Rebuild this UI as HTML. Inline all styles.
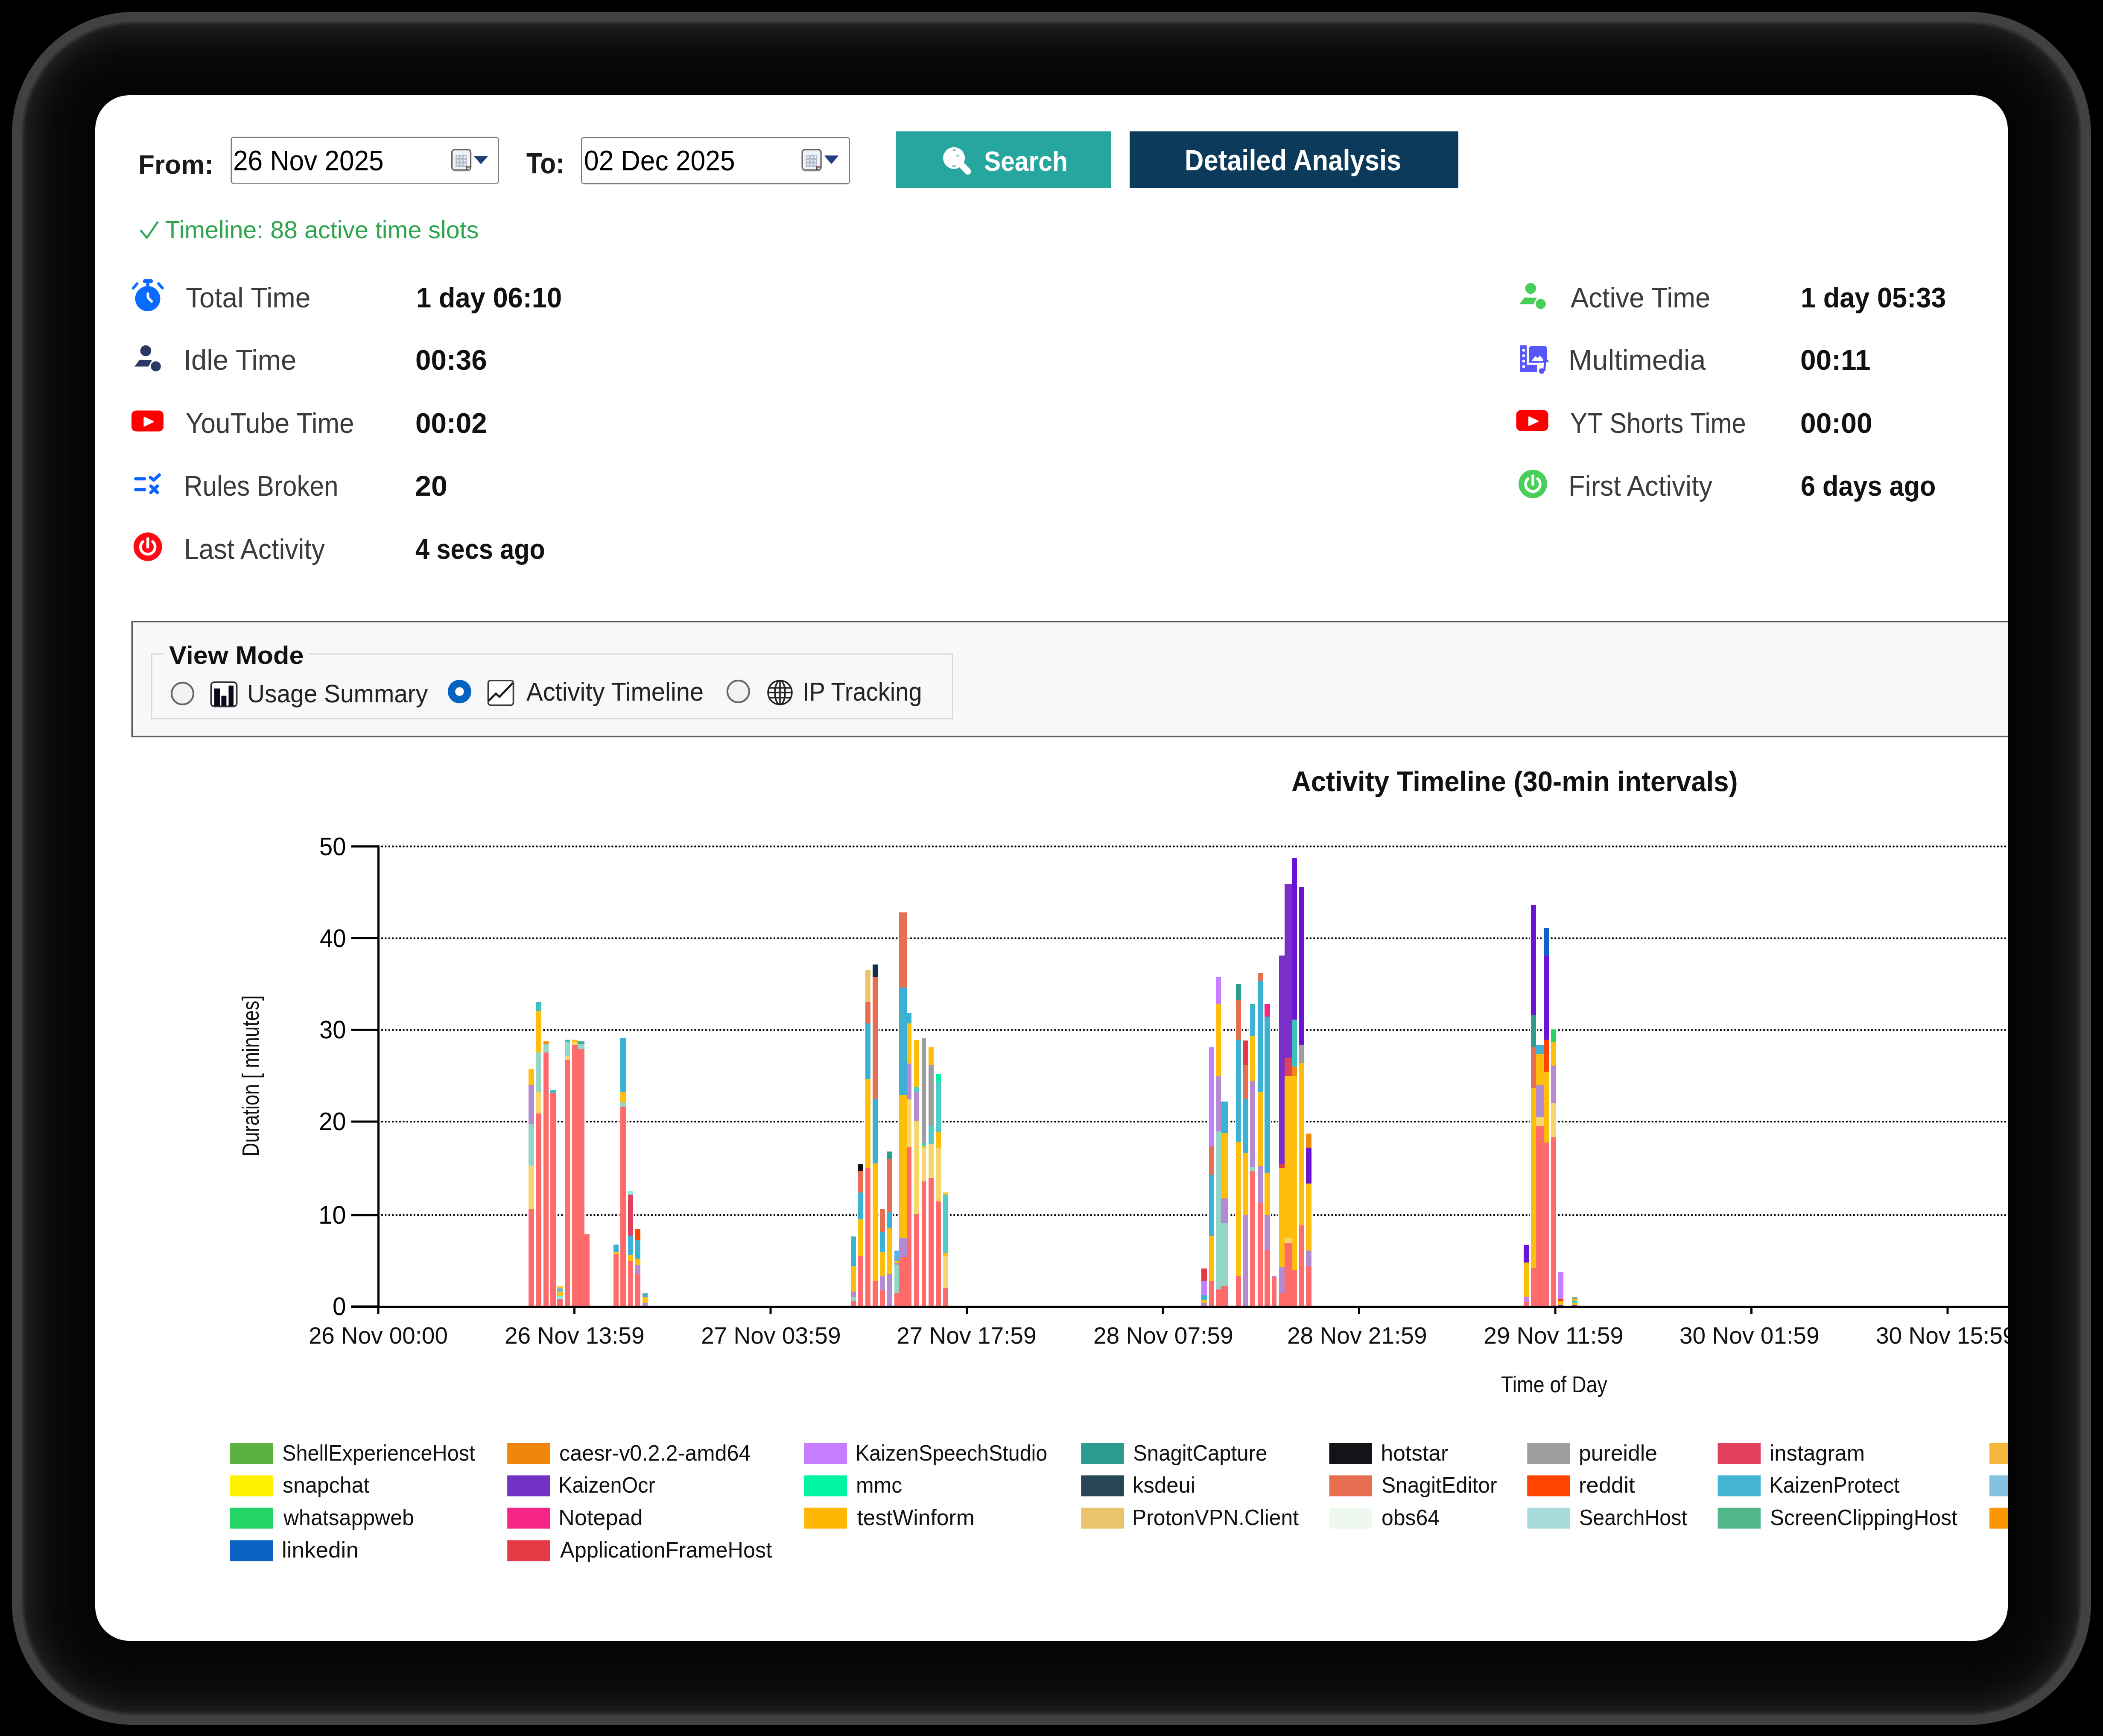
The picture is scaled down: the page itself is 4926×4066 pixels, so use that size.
<!DOCTYPE html>
<html><head><meta charset="utf-8"><title>Activity Timeline</title>
<style>
html,body{margin:0;padding:0;background:#000;}
body{width:4926px;height:4066px;position:relative;overflow:hidden;font-family:"Liberation Sans",sans-serif;}
.sh{position:absolute;}
#card{position:absolute;left:223px;top:223px;width:4480px;height:3620px;border-radius:80px;background:#fff;overflow:hidden;}
#in{position:absolute;left:-223px;top:-223px;width:4926px;height:4066px;}
.t{position:absolute;white-space:nowrap;transform-origin:0 0;}
.abs{position:absolute;}
</style></head><body>
<div class="sh" style="left:28px;top:28px;width:4870px;height:4012px;border-radius:285px;background:#414141"></div>
<div class="sh" style="left:50px;top:50px;width:4826px;height:3968px;border-radius:263px;background:#363636"></div>
<div class="sh" style="left:54px;top:54px;width:4818px;height:3960px;border-radius:259px;background:#292929"></div>
<div class="sh" style="left:57px;top:57px;width:4812px;height:3954px;border-radius:256px;background:#222222"></div>
<div class="sh" style="left:60px;top:60px;width:4806px;height:3948px;border-radius:253px;background:#1c1c1c"></div>
<div class="sh" style="left:66px;top:66px;width:4794px;height:3936px;border-radius:247px;background:#191919"></div>
<div class="sh" style="left:73px;top:73px;width:4780px;height:3922px;border-radius:240px;background:#151515"></div>
<div class="sh" style="left:83px;top:83px;width:4760px;height:3902px;border-radius:230px;background:#131313"></div>
<div class="sh" style="left:91px;top:91px;width:4744px;height:3886px;border-radius:222px;background:#101010"></div>
<div class="sh" style="left:100px;top:100px;width:4726px;height:3868px;border-radius:213px;background:#0e0e0e"></div>
<div class="sh" style="left:110px;top:110px;width:4706px;height:3848px;border-radius:203px;background:#0c0c0c"></div>
<div class="sh" style="left:120px;top:120px;width:4686px;height:3828px;border-radius:193px;background:#0a0a0a"></div>
<div class="sh" style="left:132px;top:132px;width:4662px;height:3804px;border-radius:181px;background:#090909"></div>
<div class="sh" style="left:146px;top:146px;width:4634px;height:3776px;border-radius:167px;background:#080808"></div>
<div class="sh" style="left:160px;top:160px;width:4606px;height:3748px;border-radius:153px;background:#060606"></div>
<div class="sh" style="left:176px;top:176px;width:4574px;height:3716px;border-radius:137px;background:#050505"></div>
<div class="sh" style="left:192px;top:192px;width:4542px;height:3684px;border-radius:121px;background:#050505"></div>
<div class="sh" style="left:208px;top:208px;width:4510px;height:3652px;border-radius:105px;background:#040404"></div>
<div id="card"><div id="in">
<svg class="abs" style="left:0;top:0" width="4926" height="4066" viewBox="0 0 4926 4066"><rect x="541.75" y="321.75" width="625.8" height="107.5" rx="5" fill="#fff" stroke="#7d7d7d" stroke-width="2.5"/>
<rect x="1362.25" y="322.25" width="627.5" height="107.9" rx="5" fill="#fff" stroke="#7d7d7d" stroke-width="2.5"/>
<rect x="1060" y="395" width="42" height="7" rx="3" fill="#d8d8d8" opacity="0.6"/><rect x="1058.6" y="350.6" width="44" height="47.5" rx="6" fill="#eef3fb" stroke="#6b6060" stroke-width="3.2"/><rect x="1067" y="363" width="26.6" height="28" rx="2" fill="#b9bdc9"/><circle cx="1072.0" cy="368.0" r="2.2" fill="#f4f6fa"/><circle cx="1072.0" cy="376.6" r="2.2" fill="#f4f6fa"/><circle cx="1072.0" cy="385.2" r="2.2" fill="#f4f6fa"/><circle cx="1080.5" cy="368.0" r="2.2" fill="#f4f6fa"/><circle cx="1080.5" cy="376.6" r="2.2" fill="#f4f6fa"/><circle cx="1080.5" cy="385.2" r="2.2" fill="#f4f6fa"/><circle cx="1089.0" cy="368.0" r="2.2" fill="#f4f6fa"/><circle cx="1089.0" cy="376.6" r="2.2" fill="#f4f6fa"/><circle cx="1089.0" cy="385.2" r="2.2" fill="#f4f6fa"/><path d="M 1093 399 L 1093 391 L 1103 391" fill="none" stroke="#5a4a4a" stroke-width="3"/>
<polygon points="1111,365.8 1142,365.8 1126.5,383.5" fill="#213f7c" stroke="#213f7c" stroke-width="1.5" stroke-linejoin="round"/>
<rect x="1880.5" y="395" width="42" height="7" rx="3" fill="#d8d8d8" opacity="0.6"/><rect x="1879.1" y="350.6" width="44" height="47.5" rx="6" fill="#eef3fb" stroke="#6b6060" stroke-width="3.2"/><rect x="1887.5" y="363" width="26.6" height="28" rx="2" fill="#b9bdc9"/><circle cx="1892.5" cy="368.0" r="2.2" fill="#f4f6fa"/><circle cx="1892.5" cy="376.6" r="2.2" fill="#f4f6fa"/><circle cx="1892.5" cy="385.2" r="2.2" fill="#f4f6fa"/><circle cx="1901.0" cy="368.0" r="2.2" fill="#f4f6fa"/><circle cx="1901.0" cy="376.6" r="2.2" fill="#f4f6fa"/><circle cx="1901.0" cy="385.2" r="2.2" fill="#f4f6fa"/><circle cx="1909.5" cy="368.0" r="2.2" fill="#f4f6fa"/><circle cx="1909.5" cy="376.6" r="2.2" fill="#f4f6fa"/><circle cx="1909.5" cy="385.2" r="2.2" fill="#f4f6fa"/><path d="M 1913.5 399 L 1913.5 391 L 1923.5 391" fill="none" stroke="#5a4a4a" stroke-width="3"/>
<polygon points="1932,365 1963,365 1947.5,383" fill="#213f7c" stroke="#213f7c" stroke-width="1.5" stroke-linejoin="round"/>
<rect x="2098.5" y="307.5" width="504.5" height="133.5" fill="#26a69f"/>
<rect x="2646" y="307.5" width="770" height="133.5" fill="#0b3a5a"/>
<circle cx="2234.6" cy="370.2" r="25.5" fill="#fff"/><line x1="2253" y1="387" x2="2267" y2="401.5" stroke="#fff" stroke-width="15" stroke-linecap="round"/>
<ellipse cx="2235" cy="351.5" rx="3.5" ry="2" fill="#6fc0ba"/><ellipse cx="2243.5" cy="364.5" rx="4" ry="2.5" fill="#8fd8e0"/><ellipse cx="2234.5" cy="389" rx="5" ry="2.3" fill="#8cc8c0"/>
<polyline points="329,539 344,557 370,519" fill="none" stroke="#2ea44f" stroke-width="4.5" stroke-linejoin="round"/>
<circle cx="346" cy="699.5" r="29.5" fill="#0a6cff"/><rect x="335" y="654" width="23" height="9" rx="4" fill="#0a6cff"/><rect x="342.5" y="660" width="7.5" height="14" fill="#0a6cff"/>
<line x1="321" y1="664.5" x2="312" y2="675" stroke="#0a6cff" stroke-width="6.5" stroke-linecap="round"/><line x1="371.5" y1="664.5" x2="380.5" y2="674.5" stroke="#0a6cff" stroke-width="6.5" stroke-linecap="round"/>
<polyline points="346.3,688 346.8,697.6 355,706" fill="none" stroke="#fff" stroke-width="6" stroke-linecap="round" stroke-linejoin="round"/>
<g transform="translate(0,0)"><circle cx="341.4" cy="821.5" r="12.8" fill="#2b3866"/><polygon points="315,858.6 327,842.8 356,843.2 348,858.6" fill="#2b3866"/><circle cx="365" cy="858" r="11.8" fill="#2b3866"/></g>
<g transform="translate(3244,-146)"><circle cx="341.4" cy="821.5" r="12.8" fill="#48cf5a"/><polygon points="315,858.6 327,842.8 356,843.2 348,858.6" fill="#48cf5a"/><circle cx="365" cy="858" r="11.8" fill="#48cf5a"/></g>
<g transform="translate(0,0)"><rect x="308" y="961.5" width="75" height="49" rx="11" fill="#ff0000"/><polygon points="338,977.5 359,987.5 338,997.5" fill="#fff" stroke="#fff" stroke-width="3" stroke-linejoin="round"/></g>
<g transform="translate(3243.5,-1)"><rect x="308" y="961.5" width="75" height="49" rx="11" fill="#ff0000"/><polygon points="338,977.5 359,987.5 338,997.5" fill="#fff" stroke="#fff" stroke-width="3" stroke-linejoin="round"/></g>
<g stroke="#0a66ff" stroke-width="7.5" stroke-linecap="round" fill="none"><line x1="318" y1="1121.6" x2="338.5" y2="1121.6"/><line x1="318" y1="1146.8" x2="338.5" y2="1146.8"/><polyline points="352.5,1118.5 360,1124.5 373,1112.6" stroke-linejoin="round"/><line x1="353.5" y1="1138.5" x2="368.5" y2="1153.5"/><line x1="368.5" y1="1138.5" x2="353.5" y2="1153.5"/></g>
<circle cx="346.2" cy="1280.6" r="33.5" fill="#ff0a14"/><path d="M 334.7 1268.6 A 17 17 0 1 0 357.7 1268.6" fill="none" stroke="#fff" stroke-width="6.5" stroke-linecap="round"/><line x1="346.2" y1="1261.6" x2="346.2" y2="1281.6" stroke="#fff" stroke-width="6.5" stroke-linecap="round"/>
<circle cx="3590.5" cy="1133.5" r="33.5" fill="#48cf5a"/><path d="M 3579.0 1121.5 A 17 17 0 1 0 3602.0 1121.5" fill="none" stroke="#fff" stroke-width="6.5" stroke-linecap="round"/><line x1="3590.5" y1="1114.5" x2="3590.5" y2="1134.5" stroke="#fff" stroke-width="6.5" stroke-linecap="round"/>
<g fill="#5656fa"><rect x="3560.5" y="808.5" width="15.5" height="63" rx="2"/><rect x="3582" y="810.5" width="41" height="39" rx="5"/><rect x="3576" y="854.5" width="24" height="17"/><line x1="3619" y1="846" x2="3617.5" y2="869" stroke="#5656fa" stroke-width="5"/><rect x="3617" y="843.5" width="10" height="5"/><circle cx="3611" cy="869" r="6.5"/></g>
<ellipse cx="3569" cy="820.5" rx="3.5" ry="3.2" fill="#fff"/>
<ellipse cx="3569" cy="833" rx="3.5" ry="3.2" fill="#fff"/>
<ellipse cx="3569" cy="845.7" rx="3.5" ry="3.2" fill="#fff"/>
<ellipse cx="3569" cy="858.5" rx="3.5" ry="3.2" fill="#fff"/>
<polygon points="3589,843 3597,834 3601,839 3607,833 3614,841 3614,845 3589,845" fill="#fff"/>
<rect x="3582" y="845" width="22" height="4.7" fill="#5656fa"/>
<rect x="309.25" y="1455.75" width="4600" height="269.5" fill="#f7f8fa" stroke="#5e5e5e" stroke-width="3.5"/>
<path d="M 382.5 1531.75 H 355.25 V 1683.5 H 2231 V 1531.75 H 724.8" fill="none" stroke="#d6d6d6" stroke-width="2.5"/>
<circle cx="427.5" cy="1624.4" r="25.5" fill="#f2f2f2" stroke="#676767" stroke-width="4.2"/>
<circle cx="1076.4" cy="1619.8" r="18.9" fill="#fff" stroke="#0563c1" stroke-width="17.2"/>
<circle cx="1729.3" cy="1619.4" r="25.5" fill="#f2f2f2" stroke="#676767" stroke-width="4.2"/>
<rect x="494.5" y="1598" width="60" height="56.5" rx="7" fill="#fff" stroke="#333" stroke-width="3.8"/>
<g fill="#0a0a1a"><rect x="502" y="1612.5" width="13" height="41"/><rect x="518.4" y="1629.6" width="12" height="24"/><rect x="535.5" y="1605.7" width="11.5" height="48"/></g>
<rect x="1143.5" y="1593.8" width="59" height="58" rx="6" fill="#fff" stroke="#3a3a3a" stroke-width="3.6"/>
<polyline points="1144.5,1641.6 1161.6,1624.5 1170.1,1632.2 1201,1599.7" fill="none" stroke="#1a1a1a" stroke-width="4.6"/>
<g fill="none" stroke="#222" stroke-width="3.6"><circle cx="1827" cy="1622" r="28"/><ellipse cx="1827" cy="1622" rx="12" ry="28"/><line x1="1827" y1="1594" x2="1827" y2="1650"/><line x1="1800" y1="1611" x2="1854" y2="1611"/><line x1="1799" y1="1622" x2="1855" y2="1622"/><line x1="1800" y1="1634" x2="1854" y2="1634"/></g>
<rect x="822.5" y="1980.0" width="62" height="5" fill="#000"/>
<line x1="894.95" y1="1982.5" x2="4710" y2="1982.5" stroke="#000" stroke-width="4.6" stroke-linecap="round" stroke-dasharray="0 8.43"/>
<rect x="822.5" y="2195.0" width="62" height="5" fill="#000"/>
<line x1="894.95" y1="2197.5" x2="4710" y2="2197.5" stroke="#000" stroke-width="4.6" stroke-linecap="round" stroke-dasharray="0 8.43"/>
<rect x="822.5" y="2409.8" width="62" height="5" fill="#000"/>
<line x1="894.95" y1="2412.3" x2="4710" y2="2412.3" stroke="#000" stroke-width="4.6" stroke-linecap="round" stroke-dasharray="0 8.43"/>
<rect x="822.5" y="2624.5" width="62" height="5" fill="#000"/>
<line x1="894.95" y1="2627" x2="4710" y2="2627" stroke="#000" stroke-width="4.6" stroke-linecap="round" stroke-dasharray="0 8.43"/>
<rect x="822.5" y="2843.5" width="62" height="5" fill="#000"/>
<line x1="894.95" y1="2846" x2="4710" y2="2846" stroke="#000" stroke-width="4.6" stroke-linecap="round" stroke-dasharray="0 8.43"/>
<rect x="822.5" y="3057.5" width="62" height="5" fill="#000"/>
<g shape-rendering="crispEdges"><rect x="1236.1" y="2500.5" width="16.8" height="558.5" fill="#fff"/>
<rect x="1253.0" y="2344.9" width="17.2" height="714.1" fill="#fff"/>
<rect x="1270.2" y="2437.1" width="17.1" height="621.9" fill="#fff"/>
<rect x="1286.7" y="2550.5" width="17.2" height="508.5" fill="#fff"/>
<rect x="1302.7" y="3010.7" width="17.6" height="48.3" fill="#fff"/>
<rect x="1320.2" y="2432.5" width="16.8" height="626.5" fill="#fff"/>
<rect x="1337.5" y="2432.5" width="17.3" height="626.5" fill="#fff"/>
<rect x="1350.2" y="2437.1" width="20.7" height="621.9" fill="#fff"/>
<rect x="1366.3" y="2888.5" width="17.3" height="170.5" fill="#fff"/>
<rect x="1434.3" y="2912.7" width="17.3" height="146.3" fill="#fff"/>
<rect x="1450.7" y="2429.0" width="17.6" height="630.0" fill="#fff"/>
<rect x="1468.2" y="2787.1" width="16.8" height="271.9" fill="#fff"/>
<rect x="1485.0" y="2875.9" width="17.3" height="183.1" fill="#fff"/>
<rect x="1502.3" y="3026.7" width="17.2" height="32.3" fill="#fff"/>
<rect x="1990.7" y="2893.2" width="16.3" height="165.8" fill="#fff"/>
<rect x="2007.3" y="2724.2" width="16.8" height="334.8" fill="#fff"/>
<rect x="2024.2" y="2269.4" width="16.8" height="789.6" fill="#fff"/>
<rect x="2041.4" y="2256.7" width="16.6" height="802.3" fill="#fff"/>
<rect x="2058.7" y="2829.3" width="16.1" height="229.7" fill="#fff"/>
<rect x="2075.3" y="2694.3" width="16.8" height="364.7" fill="#fff"/>
<rect x="2092.7" y="2926.4" width="16.0" height="132.6" fill="#fff"/>
<rect x="2104.1" y="2134.6" width="22.2" height="924.4" fill="#fff"/>
<rect x="2121.7" y="2370.7" width="16.0" height="688.3" fill="#fff"/>
<rect x="2138.2" y="2434.1" width="16.6" height="624.9" fill="#fff"/>
<rect x="2156.2" y="2429.5" width="15.4" height="629.5" fill="#fff"/>
<rect x="2172.3" y="2450.2" width="16.6" height="608.8" fill="#fff"/>
<rect x="2189.4" y="2513.4" width="16.8" height="545.6" fill="#fff"/>
<rect x="2206.2" y="2791.1" width="16.8" height="267.9" fill="#fff"/>
<rect x="2811.7" y="2968.9" width="17.1" height="90.1" fill="#fff"/>
<rect x="2829.2" y="2450.7" width="16.6" height="608.3" fill="#fff"/>
<rect x="2846.5" y="2286.1" width="16.1" height="772.9" fill="#fff"/>
<rect x="2858.0" y="2577.4" width="21.4" height="481.6" fill="#fff"/>
<rect x="2892.5" y="2302.2" width="16.8" height="756.8" fill="#fff"/>
<rect x="2909.4" y="2434.5" width="16.5" height="624.5" fill="#fff"/>
<rect x="2925.9" y="2349.5" width="16.6" height="709.5" fill="#fff"/>
<rect x="2943.2" y="2276.9" width="16.8" height="782.1" fill="#fff"/>
<rect x="2960.1" y="2349.5" width="17.0" height="709.5" fill="#fff"/>
<rect x="2976.7" y="2985.5" width="16.0" height="73.5" fill="#fff"/>
<rect x="2993.9" y="2235.4" width="17.3" height="823.6" fill="#fff"/>
<rect x="3006.6" y="2067.2" width="21.9" height="991.8" fill="#fff"/>
<rect x="3023.9" y="2008.0" width="16.1" height="1051.0" fill="#fff"/>
<rect x="3040.7" y="2075.3" width="16.6" height="983.7" fill="#fff"/>
<rect x="3056.7" y="2652.3" width="17.2" height="406.7" fill="#fff"/>
<rect x="3566.5" y="2914.0" width="16.8" height="145.0" fill="#fff"/>
<rect x="3583.7" y="2118.0" width="16.6" height="941.0" fill="#fff"/>
<rect x="3595.7" y="2445.6" width="22.1" height="613.4" fill="#fff"/>
<rect x="3613.2" y="2171.9" width="17.1" height="887.1" fill="#fff"/>
<rect x="3630.2" y="2408.7" width="16.6" height="650.3" fill="#fff"/>
<rect x="3647.1" y="2977.1" width="16.8" height="81.9" fill="#fff"/>
<rect x="3679.7" y="3035.7" width="17.6" height="23.3" fill="#fff"/>
<rect x="1238.4" y="2502.8" width="12.2" height="38.0" fill="#ffbe0b"/>
<rect x="1238.4" y="2540.8" width="12.2" height="92.2" fill="#b48ad2"/>
<rect x="1238.4" y="2633.0" width="12.2" height="96.5" fill="#93d6c6"/>
<rect x="1238.4" y="2729.5" width="12.2" height="101.5" fill="#f6d66d"/>
<rect x="1238.4" y="2831.0" width="12.2" height="228.0" fill="#ff6b6b"/>
<rect x="1255.3" y="2347.2" width="12.6" height="20.8" fill="#3ec0c0"/>
<rect x="1255.3" y="2368.0" width="12.6" height="96.7" fill="#ffbe0b"/>
<rect x="1255.3" y="2464.7" width="12.6" height="92.3" fill="#93d6c6"/>
<rect x="1255.3" y="2557.0" width="12.6" height="50.6" fill="#f6d66d"/>
<rect x="1255.3" y="2607.6" width="12.6" height="451.4" fill="#ff6b6b"/>
<rect x="1272.5" y="2439.4" width="12.5" height="5.3" fill="#f08a0a"/>
<rect x="1272.5" y="2444.7" width="12.5" height="20.0" fill="#93d6c6"/>
<rect x="1272.5" y="2464.7" width="12.5" height="594.3" fill="#ff6b6b"/>
<rect x="1289.0" y="2552.8" width="12.6" height="7.6" fill="#3ec0c0"/>
<rect x="1289.0" y="2560.4" width="12.6" height="498.6" fill="#ff6b6b"/>
<rect x="1305.0" y="3013.0" width="13.0" height="4.6" fill="#ffbe0b"/>
<rect x="1305.0" y="3017.6" width="13.0" height="6.9" fill="#5ab5e6"/>
<rect x="1305.0" y="3024.5" width="13.0" height="10.3" fill="#ffbe0b"/>
<rect x="1305.0" y="3034.8" width="13.0" height="6.9" fill="#8de8e0"/>
<rect x="1305.0" y="3041.7" width="13.0" height="17.3" fill="#ff6b6b"/>
<rect x="1322.5" y="2434.8" width="12.2" height="5.8" fill="#3ec0c0"/>
<rect x="1322.5" y="2440.6" width="12.2" height="32.2" fill="#93d6c6"/>
<rect x="1322.5" y="2472.8" width="12.2" height="9.2" fill="#f6d66d"/>
<rect x="1322.5" y="2482.0" width="12.2" height="577.0" fill="#ff6b6b"/>
<rect x="1339.8" y="2434.8" width="12.7" height="5.8" fill="#ffbe0b"/>
<rect x="1339.8" y="2440.6" width="12.7" height="6.9" fill="#f6d66d"/>
<rect x="1339.8" y="2447.5" width="12.7" height="611.5" fill="#ff6b6b"/>
<rect x="1352.5" y="2439.4" width="16.1" height="5.3" fill="#3fae8a"/>
<rect x="1352.5" y="2444.7" width="16.1" height="12.0" fill="#93d6c6"/>
<rect x="1352.5" y="2456.7" width="16.1" height="602.3" fill="#ff6b6b"/>
<rect x="1368.6" y="2890.8" width="12.7" height="168.2" fill="#ff6b6b"/>
<rect x="1436.6" y="2915.0" width="12.7" height="17.3" fill="#3cb1d3"/>
<rect x="1436.6" y="2932.3" width="12.7" height="5.7" fill="#ffbe0b"/>
<rect x="1436.6" y="2938.0" width="12.7" height="121.0" fill="#ff6b6b"/>
<rect x="1453.0" y="2431.3" width="13.0" height="125.7" fill="#3cb1d3"/>
<rect x="1453.0" y="2557.0" width="13.0" height="25.0" fill="#ffbe0b"/>
<rect x="1453.0" y="2582.0" width="13.0" height="9.5" fill="#93d6c6"/>
<rect x="1453.0" y="2591.5" width="13.0" height="467.5" fill="#ff6b6b"/>
<rect x="1470.5" y="2789.4" width="12.2" height="8.1" fill="#8de8e0"/>
<rect x="1470.5" y="2797.5" width="12.2" height="96.8" fill="#e0405a"/>
<rect x="1470.5" y="2894.3" width="12.2" height="46.1" fill="#3cb1d3"/>
<rect x="1470.5" y="2940.4" width="12.2" height="13.8" fill="#ffbe0b"/>
<rect x="1470.5" y="2954.2" width="12.2" height="104.8" fill="#ff6b6b"/>
<rect x="1487.3" y="2878.2" width="12.7" height="25.3" fill="#ff4500"/>
<rect x="1487.3" y="2903.5" width="12.7" height="44.9" fill="#3cb1d3"/>
<rect x="1487.3" y="2948.4" width="12.7" height="15.0" fill="#ffbe0b"/>
<rect x="1487.3" y="2963.4" width="12.7" height="19.6" fill="#b48ad2"/>
<rect x="1487.3" y="2983.0" width="12.7" height="76.0" fill="#ff6b6b"/>
<rect x="1504.6" y="3029.0" width="12.6" height="2.4" fill="#9e9e9e"/>
<rect x="1504.6" y="3031.4" width="12.6" height="6.9" fill="#3cb1d3"/>
<rect x="1504.6" y="3038.3" width="12.6" height="12.7" fill="#ffbe0b"/>
<rect x="1504.6" y="3051.0" width="12.6" height="8.0" fill="#b48ad2"/>
<rect x="1993.0" y="2895.5" width="11.7" height="70.0" fill="#3cb1d3"/>
<rect x="1993.0" y="2965.5" width="11.7" height="59.9" fill="#ffbe0b"/>
<rect x="1993.0" y="3025.4" width="11.7" height="12.9" fill="#b48ad2"/>
<rect x="1993.0" y="3038.3" width="11.7" height="8.3" fill="#93d6c6"/>
<rect x="1993.0" y="3046.6" width="11.7" height="12.4" fill="#ff6b6b"/>
<rect x="2009.6" y="2726.5" width="12.2" height="16.2" fill="#111111"/>
<rect x="2009.6" y="2742.7" width="12.2" height="50.6" fill="#e76f51"/>
<rect x="2009.6" y="2793.3" width="12.2" height="63.0" fill="#3cb1d3"/>
<rect x="2009.6" y="2856.3" width="12.2" height="84.3" fill="#ffbe0b"/>
<rect x="2009.6" y="2940.6" width="12.2" height="118.4" fill="#ff6b6b"/>
<rect x="2026.5" y="2271.7" width="12.2" height="74.8" fill="#e9c46a"/>
<rect x="2026.5" y="2346.5" width="12.2" height="50.7" fill="#e76f51"/>
<rect x="2026.5" y="2397.2" width="12.2" height="130.0" fill="#3cb1d3"/>
<rect x="2026.5" y="2527.2" width="12.2" height="207.4" fill="#ffbe0b"/>
<rect x="2026.5" y="2734.6" width="12.2" height="324.4" fill="#ff6b6b"/>
<rect x="2043.7" y="2259.0" width="12.0" height="28.8" fill="#14304a"/>
<rect x="2043.7" y="2287.8" width="12.0" height="286.2" fill="#e76f51"/>
<rect x="2043.7" y="2574.0" width="12.0" height="151.4" fill="#3cb1d3"/>
<rect x="2043.7" y="2725.4" width="12.0" height="274.2" fill="#ffbe0b"/>
<rect x="2043.7" y="2999.6" width="12.0" height="59.4" fill="#ff6b6b"/>
<rect x="2061.0" y="2831.6" width="11.5" height="53.7" fill="#e76f51"/>
<rect x="2061.0" y="2885.3" width="11.5" height="47.1" fill="#3cb1d3"/>
<rect x="2061.0" y="2932.4" width="11.5" height="55.2" fill="#ffbe0b"/>
<rect x="2061.0" y="2987.6" width="11.5" height="33.2" fill="#b48ad2"/>
<rect x="2061.0" y="3020.8" width="11.5" height="38.2" fill="#ff6b6b"/>
<rect x="2077.6" y="2696.6" width="12.2" height="17.3" fill="#2a9d8f"/>
<rect x="2077.6" y="2713.9" width="12.2" height="124.9" fill="#e76f51"/>
<rect x="2077.6" y="2838.8" width="12.2" height="38.2" fill="#3cb1d3"/>
<rect x="2077.6" y="2877.0" width="12.2" height="107.0" fill="#ffbe0b"/>
<rect x="2077.6" y="2984.0" width="12.2" height="75.0" fill="#b48ad2"/>
<rect x="2095.0" y="2928.7" width="11.4" height="23.9" fill="#5ab5e6"/>
<rect x="2095.0" y="2952.6" width="11.4" height="5.6" fill="#ffbe0b"/>
<rect x="2095.0" y="2958.2" width="11.4" height="3.6" fill="#b48ad2"/>
<rect x="2095.0" y="2961.8" width="11.4" height="67.3" fill="#93d6c6"/>
<rect x="2095.0" y="3029.1" width="11.4" height="29.9" fill="#ff6b6b"/>
<rect x="2106.4" y="2136.9" width="17.6" height="176.1" fill="#e76f51"/>
<rect x="2106.4" y="2313.0" width="17.6" height="252.3" fill="#3cb1d3"/>
<rect x="2106.4" y="2565.3" width="17.6" height="333.9" fill="#ffbe0b"/>
<rect x="2106.4" y="2899.2" width="17.6" height="45.1" fill="#b48ad2"/>
<rect x="2106.4" y="2944.3" width="17.6" height="114.7" fill="#ff6b6b"/>
<rect x="2124.0" y="2373.0" width="11.4" height="24.2" fill="#3cb1d3"/>
<rect x="2124.0" y="2397.2" width="11.4" height="93.4" fill="#ffbe0b"/>
<rect x="2124.0" y="2490.6" width="11.4" height="83.9" fill="#b48ad2"/>
<rect x="2124.0" y="2574.5" width="11.4" height="112.9" fill="#f6d66d"/>
<rect x="2124.0" y="2687.4" width="11.4" height="371.6" fill="#ff6b6b"/>
<rect x="2140.5" y="2436.4" width="12.0" height="109.3" fill="#ffbe0b"/>
<rect x="2140.5" y="2545.7" width="12.0" height="12.6" fill="#4ecdc4"/>
<rect x="2140.5" y="2558.3" width="12.0" height="66.9" fill="#b48ad2"/>
<rect x="2140.5" y="2625.2" width="12.0" height="219.2" fill="#f6d66d"/>
<rect x="2140.5" y="2844.4" width="12.0" height="214.6" fill="#ff6b6b"/>
<rect x="2158.5" y="2431.8" width="10.8" height="244.1" fill="#9e9e9e"/>
<rect x="2158.5" y="2675.9" width="10.8" height="8.0" fill="#4ecdc4"/>
<rect x="2158.5" y="2683.9" width="10.8" height="4.6" fill="#ffbe0b"/>
<rect x="2158.5" y="2688.5" width="10.8" height="78.5" fill="#f6d66d"/>
<rect x="2158.5" y="2767.0" width="10.8" height="292.0" fill="#ff6b6b"/>
<rect x="2174.6" y="2452.5" width="12.0" height="42.5" fill="#ffbe0b"/>
<rect x="2174.6" y="2495.0" width="12.0" height="141.7" fill="#9e9e9e"/>
<rect x="2174.6" y="2636.7" width="12.0" height="42.6" fill="#4ecdc4"/>
<rect x="2174.6" y="2679.3" width="12.0" height="79.5" fill="#f6d66d"/>
<rect x="2174.6" y="2758.8" width="12.0" height="300.2" fill="#ff6b6b"/>
<rect x="2191.7" y="2515.7" width="12.2" height="17.3" fill="#00f5a0"/>
<rect x="2191.7" y="2533.0" width="12.2" height="117.5" fill="#4ecdc4"/>
<rect x="2191.7" y="2650.5" width="12.2" height="38.0" fill="#ffbe0b"/>
<rect x="2191.7" y="2688.5" width="12.2" height="125.2" fill="#f6d66d"/>
<rect x="2191.7" y="2813.7" width="12.2" height="245.3" fill="#ff6b6b"/>
<rect x="2208.5" y="2793.4" width="12.2" height="5.3" fill="#ffbe0b"/>
<rect x="2208.5" y="2798.7" width="12.2" height="136.4" fill="#4ecdc4"/>
<rect x="2208.5" y="2935.1" width="12.2" height="6.5" fill="#ffbe0b"/>
<rect x="2208.5" y="2941.6" width="12.2" height="74.6" fill="#f6d66d"/>
<rect x="2208.5" y="3016.2" width="12.2" height="42.8" fill="#ff6b6b"/>
<rect x="2814.0" y="2971.2" width="12.5" height="28.6" fill="#e63946"/>
<rect x="2814.0" y="2999.8" width="12.5" height="33.2" fill="#c77dff"/>
<rect x="2814.0" y="3033.0" width="12.5" height="12.0" fill="#3cb1d3"/>
<rect x="2814.0" y="3045.0" width="12.5" height="6.4" fill="#ffbe0b"/>
<rect x="2814.0" y="3051.4" width="12.5" height="7.6" fill="#b48ad2"/>
<rect x="2831.5" y="2453.0" width="12.0" height="231.5" fill="#c77dff"/>
<rect x="2831.5" y="2684.5" width="12.0" height="66.8" fill="#e76f51"/>
<rect x="2831.5" y="2751.3" width="12.0" height="142.5" fill="#3cb1d3"/>
<rect x="2831.5" y="2893.8" width="12.0" height="106.0" fill="#ffbe0b"/>
<rect x="2831.5" y="2999.8" width="12.0" height="59.2" fill="#ff6b6b"/>
<rect x="2848.8" y="2288.4" width="11.5" height="62.2" fill="#c77dff"/>
<rect x="2848.8" y="2350.6" width="11.5" height="170.3" fill="#ffbe0b"/>
<rect x="2848.8" y="2520.9" width="11.5" height="129.1" fill="#b48ad2"/>
<rect x="2848.8" y="2650.0" width="11.5" height="370.0" fill="#93d6c6"/>
<rect x="2848.8" y="3020.0" width="11.5" height="39.0" fill="#ff6b6b"/>
<rect x="2860.3" y="2579.7" width="16.8" height="73.7" fill="#3cb1d3"/>
<rect x="2860.3" y="2653.4" width="16.8" height="153.7" fill="#ffbe0b"/>
<rect x="2860.3" y="2807.1" width="16.8" height="58.1" fill="#b48ad2"/>
<rect x="2860.3" y="2865.2" width="16.8" height="146.6" fill="#93d6c6"/>
<rect x="2860.3" y="3011.8" width="16.8" height="47.2" fill="#ff6b6b"/>
<rect x="2894.8" y="2304.5" width="12.2" height="38.0" fill="#2a9d8f"/>
<rect x="2894.8" y="2342.5" width="12.2" height="92.0" fill="#e76f51"/>
<rect x="2894.8" y="2434.5" width="12.2" height="240.8" fill="#3cb1d3"/>
<rect x="2894.8" y="2675.3" width="12.2" height="312.5" fill="#ffbe0b"/>
<rect x="2894.8" y="2987.8" width="12.2" height="71.2" fill="#ff6b6b"/>
<rect x="2911.7" y="2436.8" width="11.9" height="57.6" fill="#e63946"/>
<rect x="2911.7" y="2494.4" width="11.9" height="79.5" fill="#e76f51"/>
<rect x="2911.7" y="2573.9" width="11.9" height="125.6" fill="#3cb1d3"/>
<rect x="2911.7" y="2699.5" width="11.9" height="146.4" fill="#ffbe0b"/>
<rect x="2911.7" y="2845.9" width="11.9" height="213.1" fill="#b48ad2"/>
<rect x="2928.2" y="2351.8" width="12.0" height="74.7" fill="#3cb1d3"/>
<rect x="2928.2" y="2426.5" width="12.0" height="105.9" fill="#ffbe0b"/>
<rect x="2928.2" y="2532.4" width="12.0" height="201.6" fill="#b48ad2"/>
<rect x="2928.2" y="2734.0" width="12.0" height="9.3" fill="#93d6c6"/>
<rect x="2928.2" y="2743.3" width="12.0" height="315.7" fill="#ff6b6b"/>
<rect x="2945.5" y="2279.2" width="12.2" height="17.3" fill="#e76f51"/>
<rect x="2945.5" y="2296.5" width="12.2" height="260.1" fill="#3cb1d3"/>
<rect x="2945.5" y="2556.6" width="12.2" height="174.0" fill="#ffbe0b"/>
<rect x="2945.5" y="2730.6" width="12.2" height="86.7" fill="#b48ad2"/>
<rect x="2945.5" y="2817.3" width="12.2" height="241.7" fill="#ff6b6b"/>
<rect x="2962.4" y="2351.8" width="12.4" height="28.8" fill="#f72585"/>
<rect x="2962.4" y="2380.6" width="12.4" height="367.3" fill="#3cb1d3"/>
<rect x="2962.4" y="2747.9" width="12.4" height="98.0" fill="#ffbe0b"/>
<rect x="2962.4" y="2845.9" width="12.4" height="81.1" fill="#b48ad2"/>
<rect x="2962.4" y="2927.0" width="12.4" height="132.0" fill="#ff6b6b"/>
<rect x="2979.0" y="2987.8" width="11.4" height="3.7" fill="#b48ad2"/>
<rect x="2979.0" y="2991.5" width="11.4" height="67.5" fill="#ff6b6b"/>
<rect x="2996.2" y="2237.7" width="12.7" height="488.3" fill="#7b2fc9"/>
<rect x="2996.2" y="2726.0" width="12.7" height="9.2" fill="#e63946"/>
<rect x="2996.2" y="2735.2" width="12.7" height="231.4" fill="#ffbe0b"/>
<rect x="2996.2" y="2966.6" width="12.7" height="61.7" fill="#b48ad2"/>
<rect x="2996.2" y="3028.3" width="12.7" height="30.7" fill="#ff6b6b"/>
<rect x="3008.9" y="2069.5" width="17.3" height="407.6" fill="#7b2fc9"/>
<rect x="3008.9" y="2477.1" width="17.3" height="42.7" fill="#e0405a"/>
<rect x="3008.9" y="2519.8" width="17.3" height="380.4" fill="#ffbe0b"/>
<rect x="3008.9" y="2900.2" width="17.3" height="11.1" fill="#f6d66d"/>
<rect x="3008.9" y="2911.3" width="17.3" height="147.7" fill="#ff6b6b"/>
<rect x="3026.2" y="2010.3" width="11.5" height="378.1" fill="#6a12d6"/>
<rect x="3026.2" y="2388.4" width="11.5" height="109.5" fill="#3ec0c0"/>
<rect x="3026.2" y="2497.9" width="11.5" height="21.9" fill="#f08a0a"/>
<rect x="3026.2" y="2519.8" width="11.5" height="455.1" fill="#ffbe0b"/>
<rect x="3026.2" y="2974.9" width="11.5" height="84.1" fill="#ff6b6b"/>
<rect x="3043.0" y="2077.6" width="12.0" height="370.7" fill="#6a12d6"/>
<rect x="3043.0" y="2448.3" width="12.0" height="41.5" fill="#9e9e9e"/>
<rect x="3043.0" y="2489.8" width="12.0" height="380.0" fill="#ffbe0b"/>
<rect x="3043.0" y="2869.8" width="12.0" height="189.2" fill="#ff6b6b"/>
<rect x="3059.0" y="2654.6" width="12.6" height="33.4" fill="#f08a0a"/>
<rect x="3059.0" y="2688.0" width="12.6" height="84.1" fill="#6a12d6"/>
<rect x="3059.0" y="2772.1" width="12.6" height="156.7" fill="#ffbe0b"/>
<rect x="3059.0" y="2928.8" width="12.6" height="36.9" fill="#b48ad2"/>
<rect x="3059.0" y="2965.7" width="12.6" height="93.3" fill="#ff6b6b"/>
<rect x="3568.8" y="2916.3" width="12.2" height="41.1" fill="#6a12d6"/>
<rect x="3568.8" y="2957.4" width="12.2" height="80.6" fill="#ffbe0b"/>
<rect x="3568.8" y="3038.0" width="12.2" height="12.2" fill="#c77dff"/>
<rect x="3568.8" y="3050.2" width="12.2" height="8.8" fill="#ff6b6b"/>
<rect x="3586.0" y="2120.3" width="12.0" height="256.2" fill="#6a12d6"/>
<rect x="3586.0" y="2376.5" width="12.0" height="76.0" fill="#2a9d8f"/>
<rect x="3586.0" y="2452.5" width="12.0" height="95.5" fill="#e76f51"/>
<rect x="3586.0" y="2548.0" width="12.0" height="421.6" fill="#ffbe0b"/>
<rect x="3586.0" y="2969.6" width="12.0" height="89.4" fill="#ff6b6b"/>
<rect x="3598.0" y="2447.9" width="17.5" height="20.8" fill="#3cb1d3"/>
<rect x="3598.0" y="2468.7" width="17.5" height="73.5" fill="#ffbe0b"/>
<rect x="3598.0" y="2542.2" width="17.5" height="73.8" fill="#b48ad2"/>
<rect x="3598.0" y="2616.0" width="17.5" height="21.8" fill="#f6d66d"/>
<rect x="3598.0" y="2637.8" width="17.5" height="421.2" fill="#ff6b6b"/>
<rect x="3615.5" y="2174.2" width="12.5" height="64.0" fill="#0a62c2"/>
<rect x="3615.5" y="2238.2" width="12.5" height="197.1" fill="#6a12d6"/>
<rect x="3615.5" y="2435.3" width="12.5" height="74.7" fill="#ff4500"/>
<rect x="3615.5" y="2510.0" width="12.5" height="165.9" fill="#ffbe0b"/>
<rect x="3615.5" y="2675.9" width="12.5" height="383.1" fill="#ff6b6b"/>
<rect x="3632.5" y="2411.0" width="12.0" height="28.9" fill="#25d366"/>
<rect x="3632.5" y="2439.9" width="12.0" height="55.6" fill="#ffbe0b"/>
<rect x="3632.5" y="2495.5" width="12.0" height="87.0" fill="#b48ad2"/>
<rect x="3632.5" y="2582.5" width="12.0" height="80.7" fill="#f6d66d"/>
<rect x="3632.5" y="2663.2" width="12.0" height="395.8" fill="#ff6b6b"/>
<rect x="3649.4" y="2979.4" width="12.2" height="62.4" fill="#c77dff"/>
<rect x="3649.4" y="3041.8" width="12.2" height="6.2" fill="#ff4500"/>
<rect x="3649.4" y="3048.0" width="12.2" height="8.3" fill="#ffbe0b"/>
<rect x="3649.4" y="3056.3" width="12.2" height="2.7" fill="#7b2fc9"/>
<rect x="3682.0" y="3038.0" width="13.0" height="3.8" fill="#9e9e9e"/>
<rect x="3682.0" y="3041.8" width="13.0" height="4.6" fill="#ffbe0b"/>
<rect x="3682.0" y="3046.4" width="13.0" height="5.3" fill="#4ecdc4"/>
<rect x="3682.0" y="3051.7" width="13.0" height="4.6" fill="#ffbe0b"/>
<rect x="3682.0" y="3056.3" width="13.0" height="2.7" fill="#7b2fc9"/></g>
<rect x="884" y="1980" width="5" height="1083" fill="#000"/>
<rect x="822.5" y="3058.5" width="3900" height="5" fill="#000"/>
<rect x="883.5" y="3060" width="5" height="18" fill="#000"/>
<rect x="1343.0" y="3060" width="5" height="18" fill="#000"/>
<rect x="1802.5" y="3060" width="5" height="18" fill="#000"/>
<rect x="2262.0" y="3060" width="5" height="18" fill="#000"/>
<rect x="2721.5" y="3060" width="5" height="18" fill="#000"/>
<rect x="3181.0" y="3060" width="5" height="18" fill="#000"/>
<rect x="3640.5" y="3060" width="5" height="18" fill="#000"/>
<rect x="4100.0" y="3060" width="5" height="18" fill="#000"/>
<rect x="4559.5" y="3060" width="5" height="18" fill="#000"/>
<rect x="539" y="3380" width="100.5" height="49" fill="#5db13f"/>
<rect x="539" y="3455.5" width="100.5" height="49" fill="#fff200"/>
<rect x="539" y="3531.4" width="100.5" height="49" fill="#25d366"/>
<rect x="539" y="3607.4" width="100.5" height="49" fill="#0a62c2"/>
<rect x="1188.2" y="3380" width="100.5" height="49" fill="#f0850a"/>
<rect x="1188.2" y="3455.5" width="100.5" height="49" fill="#7232c4"/>
<rect x="1188.2" y="3531.4" width="100.5" height="49" fill="#f72585"/>
<rect x="1188.2" y="3607.4" width="100.5" height="49" fill="#e63946"/>
<rect x="1883.5" y="3380" width="100.5" height="49" fill="#c77dff"/>
<rect x="1883.5" y="3455.5" width="100.5" height="49" fill="#00f5a0"/>
<rect x="1883.5" y="3531.4" width="100.5" height="49" fill="#ffb703"/>
<rect x="2532.3" y="3380" width="100.5" height="49" fill="#2a9d8f"/>
<rect x="2532.3" y="3455.5" width="100.5" height="49" fill="#264653"/>
<rect x="2532.3" y="3531.4" width="100.5" height="49" fill="#e9c46a"/>
<rect x="3113.5" y="3380" width="100.5" height="49" fill="#141418"/>
<rect x="3113.5" y="3455.5" width="100.5" height="49" fill="#e76f51"/>
<rect x="3113.5" y="3531.4" width="100.5" height="49" fill="#eef8ee"/>
<rect x="3577.3" y="3380" width="100.5" height="49" fill="#9e9e9e"/>
<rect x="3577.3" y="3455.5" width="100.5" height="49" fill="#ff4500"/>
<rect x="3577.3" y="3531.4" width="100.5" height="49" fill="#a8dadc"/>
<rect x="4023.6" y="3380" width="100.5" height="49" fill="#e0405e"/>
<rect x="4023.6" y="3455.5" width="100.5" height="49" fill="#45b5d5"/>
<rect x="4023.6" y="3531.4" width="100.5" height="49" fill="#52b788"/>
<rect x="4660" y="3380" width="100.5" height="49" fill="#f5b73b"/>
<rect x="4660" y="3455.5" width="100.5" height="49" fill="#85c1e0"/>
<rect x="4660" y="3531.4" width="100.5" height="49" fill="#ff9500"/></svg>
<div class="t" style="left:323.89px;top:353.22px;font-size:63.52px;line-height:63.52px;color:#1a1a1a;font-weight:bold;transform:scaleX(0.9775);">From:</div>
<div class="t" style="left:546.20px;top:342.94px;font-size:66.57px;line-height:66.57px;color:#000;transform:scaleX(0.9344);">26 Nov 2025</div>
<div class="t" style="left:1232.50px;top:349.07px;font-size:68.90px;line-height:68.90px;color:#1a1a1a;font-weight:bold;transform:scaleX(0.8737);">To:</div>
<div class="t" style="left:1368.13px;top:343.39px;font-size:66.86px;line-height:66.86px;color:#000;transform:scaleX(0.9326);">02 Dec 2025</div>
<div class="t" style="left:2305.10px;top:344.62px;font-size:65.41px;line-height:65.41px;color:#fff;font-weight:bold;transform:scaleX(0.8974);">Search</div>
<div class="t" style="left:2775.22px;top:342.09px;font-size:68.75px;line-height:68.75px;color:#fff;font-weight:bold;transform:scaleX(0.8950);">Detailed Analysis</div>
<div class="t" style="left:386.50px;top:509.89px;font-size:57.41px;line-height:57.41px;color:#2ea44f;">Timeline: 88 active time slots</div>
<div class="t" style="left:435.03px;top:664.00px;font-size:66.13px;line-height:66.13px;color:#3b3b3b;transform:scaleX(0.9707);">Total Time</div>
<div class="t" style="left:974.87px;top:664.00px;font-size:66.13px;line-height:66.13px;color:#111;font-weight:bold;transform:scaleX(0.9572);">1 day 06:10</div>
<div class="t" style="left:430.09px;top:809.50px;font-size:66.13px;line-height:66.13px;color:#3b3b3b;transform:scaleX(0.9851);">Idle Time</div>
<div class="t" style="left:972.62px;top:809.50px;font-size:66.13px;line-height:66.13px;color:#111;font-weight:bold;transform:scaleX(0.9919);">00:36</div>
<div class="t" style="left:435.06px;top:958.00px;font-size:66.13px;line-height:66.13px;color:#3b3b3b;transform:scaleX(0.9362);">YouTube Time</div>
<div class="t" style="left:972.62px;top:958.00px;font-size:66.13px;line-height:66.13px;color:#111;font-weight:bold;transform:scaleX(0.9919);">00:02</div>
<div class="t" style="left:431.44px;top:1105.40px;font-size:66.13px;line-height:66.13px;color:#3b3b3b;transform:scaleX(0.9112);">Rules Broken</div>
<div class="t" style="left:971.54px;top:1105.40px;font-size:66.13px;line-height:66.13px;color:#111;font-weight:bold;transform:scaleX(1.0319);">20</div>
<div class="t" style="left:431.27px;top:1252.80px;font-size:66.13px;line-height:66.13px;color:#3b3b3b;transform:scaleX(0.9456);">Last Activity</div>
<div class="t" style="left:972.70px;top:1252.80px;font-size:66.13px;line-height:66.13px;color:#111;font-weight:bold;transform:scaleX(0.8988);">4 secs ago</div>
<div class="t" style="left:3679.00px;top:664.00px;font-size:66.13px;line-height:66.13px;color:#3b3b3b;transform:scaleX(0.9578);">Active Time</div>
<div class="t" style="left:4218.18px;top:664.00px;font-size:66.13px;line-height:66.13px;color:#111;font-weight:bold;transform:scaleX(0.9549);">1 day 05:33</div>
<div class="t" style="left:3673.97px;top:809.50px;font-size:66.13px;line-height:66.13px;color:#3b3b3b;transform:scaleX(1.0059);">Multimedia</div>
<div class="t" style="left:4216.71px;top:809.50px;font-size:66.13px;line-height:66.13px;color:#111;font-weight:bold;transform:scaleX(0.9951);">00:11</div>
<div class="t" style="left:3678.09px;top:958.00px;font-size:66.13px;line-height:66.13px;color:#3b3b3b;transform:scaleX(0.9065);">YT Shorts Time</div>
<div class="t" style="left:4216.71px;top:958.00px;font-size:66.13px;line-height:66.13px;color:#111;font-weight:bold;transform:scaleX(0.9973);">00:00</div>
<div class="t" style="left:3674.22px;top:1105.40px;font-size:66.13px;line-height:66.13px;color:#3b3b3b;transform:scaleX(0.9560);">First Activity</div>
<div class="t" style="left:4217.75px;top:1105.40px;font-size:66.13px;line-height:66.13px;color:#111;font-weight:bold;transform:scaleX(0.9259);">6 days ago</div>
<div class="t" style="left:396.40px;top:1504.54px;font-size:59.59px;line-height:59.59px;color:#111;font-weight:bold;transform:scaleX(1.0286);">View Mode</div>
<div class="t" style="left:578.58px;top:1594.54px;font-size:59.59px;line-height:59.59px;color:#222;transform:scaleX(0.9539);">Usage Summary</div>
<div class="t" style="left:1232.50px;top:1591.45px;font-size:60.18px;line-height:60.18px;color:#222;transform:scaleX(0.9626);">Activity Timeline</div>
<div class="t" style="left:1880.04px;top:1591.45px;font-size:60.18px;line-height:60.18px;color:#222;transform:scaleX(0.9328);">IP Tracking</div>
<div class="t" style="left:3025.04px;top:1796.50px;font-size:66.13px;line-height:66.13px;color:#111;font-weight:bold;transform:scaleX(0.9593);">Activity Timeline (30-min intervals)</div>
<div class="t" style="left:748.12px;top:1952.54px;font-size:59.59px;line-height:59.59px;color:#000;transform:scaleX(0.9415);">50</div>
<div class="t" style="left:749.07px;top:2167.54px;font-size:59.59px;line-height:59.59px;color:#000;transform:scaleX(0.9266);">40</div>
<div class="t" style="left:748.12px;top:2382.34px;font-size:59.59px;line-height:59.59px;color:#000;transform:scaleX(0.9415);">30</div>
<div class="t" style="left:747.13px;top:2597.04px;font-size:59.59px;line-height:59.59px;color:#000;transform:scaleX(0.9569);">20</div>
<div class="t" style="left:746.11px;top:2816.04px;font-size:59.59px;line-height:59.59px;color:#000;transform:scaleX(0.9728);">10</div>
<div class="t" style="left:779.10px;top:3030.04px;font-size:59.59px;line-height:59.59px;color:#000;transform:scaleX(0.9483);">0</div>
<div class="t" style="left:722.90px;top:3100.90px;font-size:54.80px;line-height:54.80px;color:#111;">26 Nov 00:00</div>
<div class="t" style="left:1182.49px;top:3100.90px;font-size:54.80px;line-height:54.80px;color:#111;transform:scaleX(1.0049);">26 Nov 13:59</div>
<div class="t" style="left:1641.99px;top:3100.90px;font-size:54.80px;line-height:54.80px;color:#111;transform:scaleX(1.0049);">27 Nov 03:59</div>
<div class="t" style="left:2100.49px;top:3100.90px;font-size:54.80px;line-height:54.80px;color:#111;transform:scaleX(1.0049);">27 Nov 17:59</div>
<div class="t" style="left:2560.99px;top:3100.90px;font-size:54.80px;line-height:54.80px;color:#111;transform:scaleX(1.0049);">28 Nov 07:59</div>
<div class="t" style="left:3014.99px;top:3100.90px;font-size:54.80px;line-height:54.80px;color:#111;transform:scaleX(1.0049);">28 Nov 21:59</div>
<div class="t" style="left:3474.96px;top:3100.90px;font-size:54.80px;line-height:54.80px;color:#111;transform:scaleX(1.0178);">29 Nov 11:59</div>
<div class="t" style="left:3934.49px;top:3100.90px;font-size:54.80px;line-height:54.80px;color:#111;transform:scaleX(1.0049);">30 Nov 01:59</div>
<div class="t" style="left:4393.99px;top:3100.90px;font-size:54.80px;line-height:54.80px;color:#111;transform:scaleX(1.0049);">30 Nov 15:59</div>
<div class="t" style="left:3516.14px;top:3216.47px;font-size:53.78px;line-height:53.78px;color:#111;transform:scaleX(0.8643);">Time of Day</div>
<div class="t" style="left:661.11px;top:3377.81px;font-size:51.60px;line-height:51.60px;color:#111;transform:scaleX(0.9428);">ShellExperienceHost</div>
<div class="t" style="left:662.03px;top:3453.31px;font-size:51.60px;line-height:51.60px;color:#111;transform:scaleX(0.9711);">snapchat</div>
<div class="t" style="left:663.97px;top:3529.21px;font-size:51.60px;line-height:51.60px;color:#111;transform:scaleX(0.9691);">whatsappweb</div>
<div class="t" style="left:659.92px;top:3605.21px;font-size:51.60px;line-height:51.60px;color:#111;transform:scaleX(1.0282);">linkedin</div>
<div class="t" style="left:1310.24px;top:3377.81px;font-size:51.60px;line-height:51.60px;color:#111;transform:scaleX(0.9776);">caesr-v0.2.2-amd64</div>
<div class="t" style="left:1308.43px;top:3453.31px;font-size:51.60px;line-height:51.60px;color:#111;transform:scaleX(0.9416);">KaizenOcr</div>
<div class="t" style="left:1308.15px;top:3529.21px;font-size:51.60px;line-height:51.60px;color:#111;transform:scaleX(1.0132);">Notepad</div>
<div class="t" style="left:1312.20px;top:3605.21px;font-size:51.60px;line-height:51.60px;color:#111;transform:scaleX(0.9778);">ApplicationFrameHost</div>
<div class="t" style="left:2003.75px;top:3377.81px;font-size:51.60px;line-height:51.60px;color:#111;transform:scaleX(0.9377);">KaizenSpeechStudio</div>
<div class="t" style="left:2004.60px;top:3453.31px;font-size:51.60px;line-height:51.60px;color:#111;transform:scaleX(0.9682);">mmc</div>
<div class="t" style="left:2007.50px;top:3529.21px;font-size:51.60px;line-height:51.60px;color:#111;">testWinform</div>
<div class="t" style="left:2654.39px;top:3377.81px;font-size:51.60px;line-height:51.60px;color:#111;transform:scaleX(0.9529);">SnagitCapture</div>
<div class="t" style="left:2653.34px;top:3453.31px;font-size:51.60px;line-height:51.60px;color:#111;transform:scaleX(0.9864);">ksdeui</div>
<div class="t" style="left:2652.44px;top:3529.21px;font-size:51.60px;line-height:51.60px;color:#111;transform:scaleX(0.9645);">ProtonVPN.Client</div>
<div class="t" style="left:3234.49px;top:3377.81px;font-size:51.60px;line-height:51.60px;color:#111;">hotstar</div>
<div class="t" style="left:3235.58px;top:3453.31px;font-size:51.60px;line-height:51.60px;color:#111;transform:scaleX(0.9623);">SnagitEditor</div>
<div class="t" style="left:3235.56px;top:3529.21px;font-size:51.60px;line-height:51.60px;color:#111;transform:scaleX(0.9678);">obs64</div>
<div class="t" style="left:3698.29px;top:3377.81px;font-size:51.60px;line-height:51.60px;color:#111;transform:scaleX(1.0026);">pureidle</div>
<div class="t" style="left:3698.24px;top:3453.31px;font-size:51.60px;line-height:51.60px;color:#111;transform:scaleX(1.0208);">reddit</div>
<div class="t" style="left:3699.42px;top:3529.21px;font-size:51.60px;line-height:51.60px;color:#111;transform:scaleX(0.9384);">SearchHost</div>
<div class="t" style="left:4144.65px;top:3377.81px;font-size:51.60px;line-height:51.60px;color:#111;transform:scaleX(0.9841);">instagram</div>
<div class="t" style="left:4143.79px;top:3453.31px;font-size:51.60px;line-height:51.60px;color:#111;transform:scaleX(0.9515);">KaizenProtect</div>
<div class="t" style="left:4145.68px;top:3529.21px;font-size:51.60px;line-height:51.60px;color:#111;transform:scaleX(0.9623);">ScreenClippingHost</div>
<div class="t" style="left:559.78px;top:2708.68px;font-size:54.94px;line-height:54.94px;color:#111;transform:rotate(-90deg) scaleX(0.8191);">Duration [ minutes]</div>
</div></div>
</body></html>
